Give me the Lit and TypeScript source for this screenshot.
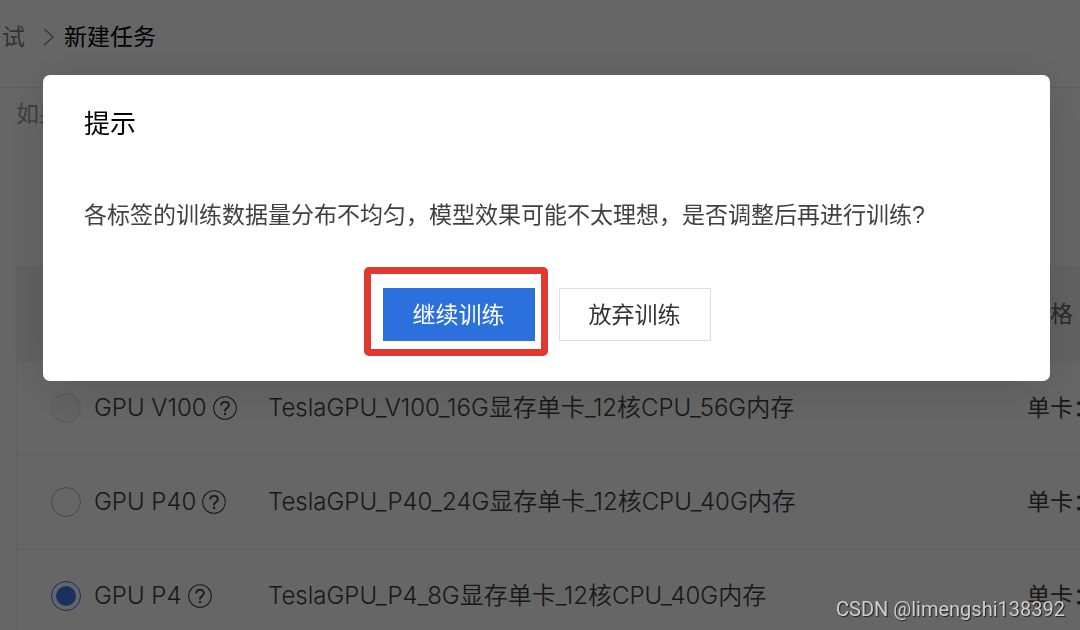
import { LitElement, html, css, svg } from "lit";
import { customElement, property, state } from "lit/decorators.js";

interface Machine {
  id: string;
  name: string;
  spec: string;
  disabled: boolean;
}

const MACHINES: Machine[] = [
  { id: "v100", name: "GPU V100", spec: "TeslaGPU_V100_16G显存单卡_12核CPU_56G内存", disabled: true },
  { id: "p40", name: "GPU P40", spec: "TeslaGPU_P40_24G显存单卡_12核CPU_40G内存", disabled: false },
  { id: "p4", name: "GPU P4", spec: "TeslaGPU_P4_8G显存单卡_12核CPU_40G内存", disabled: false },
];

const helpIcon = svg`
  <circle cx="12" cy="12" r="11.3" fill="none" stroke="currentColor" stroke-width="1.1"/>
  <path d="M8.2 9.6C8.2 7.3 9.8 5.9 12 5.9s3.8 1.3 3.8 3.3c0 1.5-.8 2.3-2 3.1-1.2.8-1.8 1.4-1.8 2.7v.5" fill="none" stroke="currentColor" stroke-width="1.9"/>
  <circle cx="12" cy="18" r="1.2" fill="currentColor"/>`;

@customElement("machine-table")
export class MachineTable extends LitElement {
  @state() selected = "p4";

  static styles = css`
    :host {
      display: block;
      overflow: hidden;
      font-family: Inter, "Noto Sans CJK SC", sans-serif;
    }
    .table {
      width: 100%;
      min-width: 1310px;
      table-layout: fixed;
      border-collapse: separate;
      border-spacing: 0;
      border-left: 1px solid #efefef;
      border-top: 1px solid #efefef;
    }
    .col-name {
      width: 251px;
    }
    .col-price {
      width: 299px;
    }
    .cell {
      box-sizing: border-box;
      height: 94px;
      padding: 0;
      border-bottom: 2px solid #f4f4f4;
      text-align: left;
      font-size: 24px;
      font-weight: 350;
      white-space: nowrap;
    }
    .head {
      height: 95px;
      background: #f5f5f5;
      color: #666;
    }
    .price {
      font-size: 23px;
      font-weight: 400;
    }
    .option {
      display: flex;
      align-items: center;
      gap: 6px;
      padding-left: 34px;
    }
    .label {
      display: flex;
      align-items: center;
      gap: 13px;
    }
    .radio {
      appearance: none;
      box-sizing: border-box;
      display: grid;
      place-items: center;
      width: 30px;
      height: 30px;
      margin: 0;
      border: 1px solid #b4b4b4;
      border-radius: 50%;
      background: #fff;
    }
    .radio:disabled {
      border-color: #dcdcdc;
      background: #f7f7f7;
    }
    .radio:checked {
      border-color: #3c7af0;
    }
    .radio:checked::after {
      content: "";
      width: 20px;
      height: 20px;
      border-radius: 50%;
      background: #3f7cf0;
    }
    .help {
      display: block;
      width: 24px;
      height: 24px;
    }
  `;

  render() {
    return html`
      <table class="table">
        <colgroup>
          <col class="col-name" />
          <col />
          <col class="col-price" />
        </colgroup>
        <thead>
          <tr>
            <th class="cell head"></th>
            <th class="cell head"></th>
            <th class="cell head price">价格</th>
          </tr>
        </thead>
        <tbody>
          ${MACHINES.map(
            (m) => html`
              <tr>
                <td class="cell">
                  <div class="option">
                    <label class="label">
                      <input
                        class="radio"
                        type="radio"
                        name="machine"
                        .checked=${this.selected === m.id}
                        ?disabled=${m.disabled}
                        @change=${() => (this.selected = m.id)}
                      />
                      <span>${m.name}</span>
                    </label>
                    <svg class="help" viewBox="0 0 24 24" aria-hidden="true">${helpIcon}</svg>
                  </div>
                </td>
                <td class="cell">${m.spec}</td>
                <td class="cell price">单卡：</td>
              </tr>
            `
          )}
        </tbody>
      </table>
    `;
  }
}

@customElement("confirm-dialog")
export class ConfirmDialog extends LitElement {
  @property() heading = "";
  @property() message = "";

  static styles = css`
    :host {
      display: block;
      position: fixed;
      inset: 0;
      background: rgba(0, 0, 0, 0.6);
    }
    .dialog {
      display: flex;
      flex-direction: column;
      margin: 75px 30px 0 43px;
      padding: 33px 41px 40px;
      border-radius: 7px;
      background: #fff;
      box-shadow: 0 8px 48px rgba(0, 0, 0, 0.14);
    }
    .title {
      margin: 0;
      font-size: 26px;
      line-height: 32px;
      font-weight: 400;
      color: #000;
    }
    .message {
      margin: 59px 0 57px;
      line-height: 32px;
      color: #404040;
    }
    .actions {
      display: flex;
      justify-content: center;
      gap: 24px;
    }
    .marked {
      position: relative;
    }
    .marked::after {
      content: "";
      position: absolute;
      inset: -21px -13px -15px -19px;
      border: 7px solid #e1392f;
      border-radius: 5px;
      pointer-events: none;
    }
    .button {
      box-sizing: border-box;
      display: block;
      width: 152px;
      height: 53px;
      padding: 0;
      border: 1px solid #dedede;
      background: #fff;
      color: #333;
      font: inherit;
    }
    .primary {
      border-color: #2b70dd;
      background: #2b70dd;
      color: #fff;
    }
  `;

  render() {
    return html`
      <section class="dialog" role="dialog" aria-labelledby="title">
        <h2 class="title" id="title">${this.heading}</h2>
        <p class="message">${this.message}</p>
        <div class="actions">
          <div class="marked">
            <button class="button primary" type="button">继续训练</button>
          </div>
          <button class="button" type="button">放弃训练</button>
        </div>
      </section>
    `;
  }
}

@customElement("app-root")
export class AppRoot extends LitElement {
  static styles = css`
    :host {
      display: block;
      position: relative;
      height: 100vh;
      overflow: hidden;
      background: #fff;
      color: #404040;
      font-family: "Liberation Sans", "Noto Sans CJK SC", sans-serif;
      font-size: 23px;
      line-height: 32px;
    }
    .crumbs {
      display: flex;
      align-items: center;
      padding: 21px 2px 34px;
      border-bottom: 1px solid #ededed;
    }
    .crumb {
      color: #808080;
      text-decoration: none;
    }
    .chevron {
      width: 12px;
      height: 18px;
      margin: 0 9px 0 18px;
      color: #808080;
    }
    .current {
      color: #000;
    }
    .content {
      padding-left: 16px;
    }
    .tip {
      margin: 0;
      padding: 10px 0 136px;
      color: #999;
    }
    .watermark {
      position: absolute;
      right: 15px;
      bottom: 9px;
      font-family: Roboto, sans-serif;
      font-size: 20px;
      line-height: 24px;
      color: #cfcfcf;
      text-shadow: 1px 1px 1px rgba(0, 0, 0, 0.7);
    }
  `;

  render() {
    return html`
      <nav class="crumbs">
        <a class="crumb" href="#">试</a>
        <svg class="chevron" viewBox="0 0 12 18" aria-hidden="true">
          <path d="M1.2 1 10.2 9 1.2 17" fill="none" stroke="currentColor" stroke-width="1.2" />
        </svg>
        <span class="current">新建任务</span>
      </nav>
      <main class="content">
        <p class="tip">如果</p>
        <machine-table></machine-table>
      </main>
      <confirm-dialog
        heading="提示"
        message="各标签的训练数据量分布不均匀，模型效果可能不太理想，是否调整后再进行训练?"
      ></confirm-dialog>
      <span class="watermark">CSDN @limengshi138392</span>
    `;
  }
}
